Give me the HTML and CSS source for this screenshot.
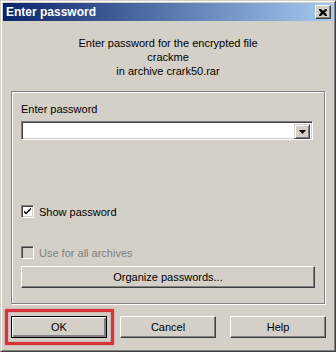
FILE: index.html
```html
<!DOCTYPE html>
<html>
<head>
<meta charset="utf-8">
<link rel="stylesheet" href="styles.css">
</head>
<body>
<div class="window">
  <div class="titlebar">
    <span class="title">Enter password</span>
    <button class="close" aria-label="Close">
      <svg width="8" height="7" viewBox="0 0 8 7"><path d="M0 0h2l2 2 2-2h2v1L6 3.5 8 6v1H6L4 5 2 7H0V6l2-2.5L0 1z" fill="#000"/></svg>
    </button>
  </div>
  <div class="message">
    <div>Enter password for the encrypted file</div>
    <div>crackme</div>
    <div>in archive crark50.rar</div>
  </div>
  <div class="group">
    <div class="label">Enter password</div>
    <div class="combo">
      <div class="combo-field"></div>
      <div class="combo-btn">
        <svg width="7" height="4" viewBox="0 0 7 4"><path d="M0 0h7L3.5 4z" fill="#000"/></svg>
      </div>
    </div>
    <label class="check show">
      <span class="box">
        <svg width="9" height="9" viewBox="0 0 9 9"><path d="M1 3.5l2 2L8 0.5v2L3 7.5l-2-2z" fill="#000"/></svg>
      </span>
      <span>Show password</span>
    </label>
    <label class="check disabled">
      <span class="box"></span>
      <span>Use for all archives</span>
    </label>
    <button class="btn wide">Organize passwords...</button>
  </div>
  <div class="buttons">
    <div class="ok-wrap">
      <button class="btn default">OK</button>
      <div class="highlight"></div>
    </div>
    <button class="btn">Cancel</button>
    <button class="btn">Help</button>
  </div>
</div>
</body>
</html>
```
FILE: styles.css
```css
* { box-sizing: border-box; }
html, body {
  margin: 0;
  padding: 0;
  background: #d4d0c8;
}
body {
  font-family: "Liberation Sans", Arial, sans-serif;
  font-size: 11px;
  color: #000;
}
.window {
  width: 336px;
  height: 352px;
  background: #d4d0c8;
  border: 1px solid;
  border-color: #d4d0c8 #404040 #404040 #d4d0c8;
  box-shadow: inset 1px 1px #fff, inset -1px -1px #808080;
  padding: 2px;
  display: flex;
  flex-direction: column;
}
.titlebar {
  height: 18px;
  background: linear-gradient(to right, #0a246a, #a6caf0);
  display: flex;
  align-items: center;
  justify-content: space-between;
  padding: 0 2px 0 3px;
}
.title {
  color: #fff;
  font-weight: bold;
  font-size: 12px;
}
.close {
  width: 16px;
  height: 14px;
  padding: 0;
  margin: 0;
  background: #d4d0c8;
  border: 1px solid;
  border-color: #fff #404040 #404040 #fff;
  box-shadow: inset -1px -1px #808080;
  display: flex;
  align-items: center;
  justify-content: center;
}
.message {
  margin-top: 15px;
  text-align: center;
  line-height: 14px;
}
.group {
  margin: 13px 8px 0 8px;
  border: 1px solid #808080;
  box-shadow: inset 1px 1px #fff, 1px 1px #fff;
  padding: 10px 11px 13px 9px;
  display: flex;
  flex-direction: column;
  height: 213px;
}
.label {
  line-height: 14px;
}
.combo {
  margin-top: 5px;
  height: 19px;
  background: #fff;
  border: 1px solid;
  border-color: #808080 #fff #fff #808080;
  box-shadow: inset 1px 1px #404040, inset -1px -1px #d4d0c8;
  display: flex;
  padding: 2px;
}
.combo-field { flex: 1; }
.combo-btn {
  width: 16px;
  height: 15px;
  background: #d4d0c8;
  border: 1px solid;
  border-color: #d4d0c8 #404040 #404040 #d4d0c8;
  box-shadow: inset 1px 1px #fff, inset -1px -1px #808080;
  display: flex;
  align-items: center;
  justify-content: center;
}
.check {
  display: flex;
  align-items: center;
  gap: 5px;
  height: 13px;
}
.check.show { margin-top: 65px; }
.check.disabled { margin-top: 28px; color: #808080; }
.box {
  width: 13px;
  height: 13px;
  background: #fff;
  border: 1px solid;
  border-color: #808080 #fff #fff #808080;
  box-shadow: inset 1px 1px #404040, inset -1px -1px #d4d0c8;
  display: flex;
  align-items: center;
  justify-content: center;
}
.check.disabled .box { background: #d4d0c8; }
.btn {
  font-family: "Liberation Sans", Arial, sans-serif;
  font-size: 11px;
  color: #000;
  height: 22px;
  width: 96px;
  padding: 0;
  background: #d4d0c8;
  border: 1px solid;
  border-color: #fff #404040 #404040 #fff;
  box-shadow: inset -1px -1px #808080;
}
.btn.wide {
  width: 294px;
  margin-top: 7px;
}
.btn.default {
  border: 1px solid #000;
  box-shadow: inset 1px 1px #fff, inset -2px -2px #808080, inset -1px -1px #404040;
}
.buttons {
  display: flex;
  margin: 12px 0 0 8px;
  gap: 13px;
}
.buttons .btn:last-child { margin-left: 1px; }
.ok-wrap {
  position: relative;
  width: 96px;
  height: 22px;
}
.highlight {
  position: absolute;
  left: -6px;
  top: -7px;
  right: -7px;
  bottom: -7px;
  border: 3px solid #d8333b;
  box-shadow: 0 0 2px rgba(216, 51, 59, 0.5), inset 0 0 2px rgba(216, 51, 59, 0.5);
  pointer-events: none;
}
```
